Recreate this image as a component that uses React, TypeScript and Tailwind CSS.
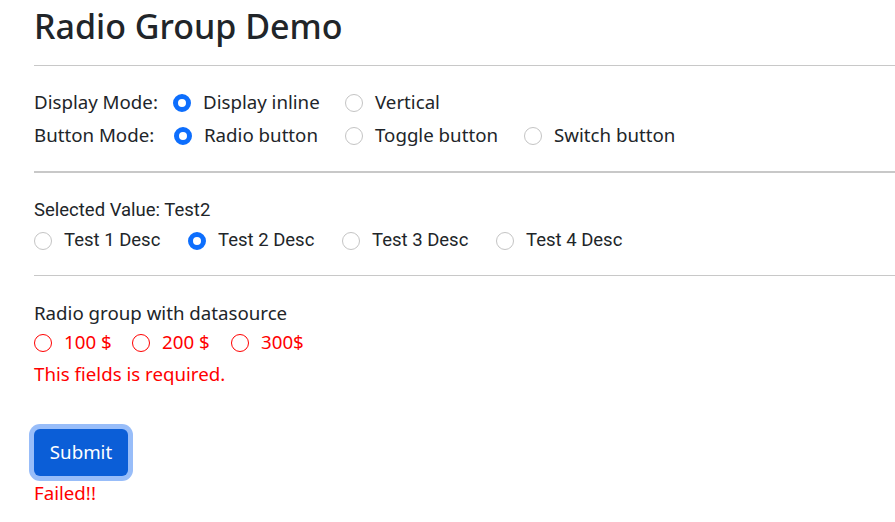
import { useState } from "react";

function Radio({ checked, invalid }: { checked?: boolean; invalid?: boolean }) {
  if (checked) {
    return <span className="inline-block h-[18px] w-[18px] shrink-0 rounded-full border-[5px] border-[#0d6efd] bg-white" />;
  }
  return (
    <span
      className={`inline-block h-[18px] w-[18px] shrink-0 rounded-full bg-white ${
        invalid ? "border-[1.5px] border-[#f00]" : "border border-[#c4c4c4]"
      }`}
    />
  );
}

function Option({
  label,
  checked,
  invalid,
  onClick,
  className = "",
}: {
  label: string;
  checked?: boolean;
  invalid?: boolean;
  onClick?: () => void;
  className?: string;
}) {
  return (
    <button type="button" onClick={onClick} className={`flex items-center gap-[12px] ${className}`}>
      <Radio checked={checked} invalid={invalid} />
      <span className={invalid ? "text-[#f00]" : ""}>{label}</span>
    </button>
  );
}

export default function App() {
  const [display, setDisplay] = useState("inline");
  const [mode, setMode] = useState("radio");
  const [test, setTest] = useState("Test2");

  return (
    <main className="min-h-[522px] overflow-hidden bg-white pl-[34px] font-['Noto_Sans','Open_Sans',sans-serif] text-[18.7px] text-[#212529]">
      <h1 className="pt-[3px] text-[34px] font-medium leading-[46px]">Radio Group Demo</h1>

      <hr className="mt-[16px] border-t border-[#c8c8c8]" />

      <div className="mt-[23px] space-y-[6px]">
        <div className="flex h-[27px] items-center">
          <span className="w-[139px]">Display Mode:</span>
          <Option label="Display inline" checked={display === "inline"} onClick={() => setDisplay("inline")} className="w-[172px]" />
          <Option label="Vertical" checked={display === "vertical"} onClick={() => setDisplay("vertical")} />
        </div>
        <div className="flex h-[27px] items-center">
          <span className="w-[140px]">Button Mode:</span>
          <Option label="Radio button" checked={mode === "radio"} onClick={() => setMode("radio")} className="w-[171px]" />
          <Option label="Toggle button" checked={mode === "toggle"} onClick={() => setMode("toggle")} className="w-[179px]" />
          <Option label="Switch button" checked={mode === "switch"} onClick={() => setMode("switch")} />
        </div>
      </div>

      <hr className="mt-[22px] border-t-2 border-[#c8c8c8]" />

      <div className="mt-[24px] font-['Roboto',sans-serif] text-[18.5px]">
        <div className="leading-[27px]">Selected Value: {test}</div>
        <div className="mt-[3px] flex h-[27px] items-center">
          {["Test1", "Test2", "Test3", "Test4"].map((t, i) => (
            <Option
              key={t}
              label={`Test ${i + 1} Desc`}
              checked={test === t}
              onClick={() => setTest(t)}
              className="w-[154px]"
            />
          ))}
        </div>
      </div>

      <hr className="mt-[21px] border-t border-[#c8c8c8]" />

      <div className="mt-[23px]">
        <div className="leading-[27px]">Radio group with datasource</div>
        <div className="mt-[3px] flex h-[27px] items-center">
          <Option label="100 $" invalid className="w-[98px]" />
          <Option label="200 $" invalid className="w-[99px]" />
          <Option label="300$" invalid />
        </div>
        <div className="mt-[4px] leading-[27px] text-[#f00]">This fields is required.</div>
      </div>

      <button
        type="button"
        className="mt-[42px] h-[47px] w-[94px] rounded-[6px] bg-[#0b5ed7] text-white ring-[5px] ring-[#98bdf9]"
      >
        Submit
      </button>
      <div className="mt-[3px] leading-[27px] text-[#f00]">Failed!!</div>
    </main>
  );
}
